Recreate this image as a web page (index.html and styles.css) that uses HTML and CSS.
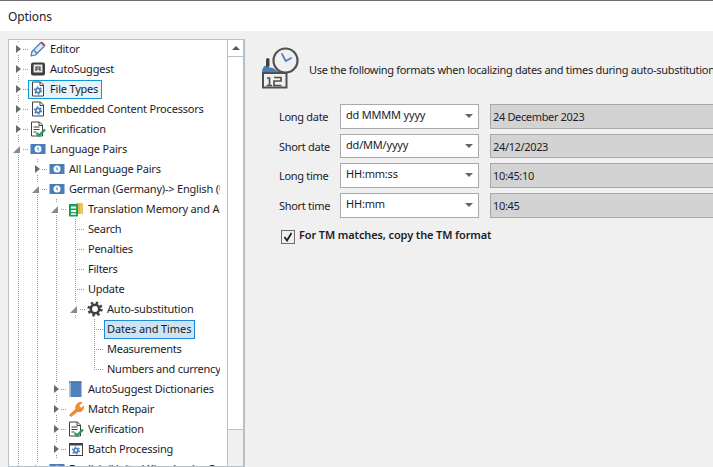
FILE: index.html
```html
<!DOCTYPE html>
<html lang="en">
<head>
<meta charset="utf-8">
<title>Options</title>
<link rel="stylesheet" href="styles.css">
</head>
<body>
<svg class="defs" width="0" height="0" aria-hidden="true">
  <symbol id="i-pencil" viewBox="0 0 16 16">
    <path d="M1 15l1-4.500L11 1.500l3.500 3.500-9 9z" fill="#dce8f5" stroke="#4a7ebb" stroke-width="1.200" stroke-linejoin="round"/>
    <path d="M4 9.500l3 3" stroke="#4a7ebb" stroke-width="1.200"/>
    <path d="M12 .5l3.500 3.500-1.300 1.300-3.500-3.500z" fill="#c9403a"/>
  </symbol>
  <symbol id="i-auto" viewBox="0 0 16 16">
    <rect x="1" y="1.500" width="14" height="13" rx="2" fill="#3c3c3c"/>
    <rect x="3.500" y="3.500" width="9" height="8" fill="#e6e6e6"/>
    <path d="M6 10V6h4v4M6 8h4" fill="none" stroke="#3c3c3c" stroke-width="1.100"/>
  </symbol>
  <symbol id="i-file" viewBox="0 0 16 16">
    <path d="M2.500 1h8l3 3v11h-11z" fill="#fff" stroke="#404040"/>
    <path d="M10 1v3.500h3.500" fill="none" stroke="#404040"/>
    <circle cx="8" cy="9.500" r="2.200" fill="none" stroke="#4a7ebb" stroke-width="1.700"/>
    <circle cx="8" cy="9.500" r="3.500" fill="none" stroke="#4a7ebb" stroke-width="1.400" stroke-dasharray="1.800 1.860"/>
  </symbol>
  <symbol id="i-verify" viewBox="0 0 16 16">
    <path d="M1.500 1h8l3 3v11h-11z" fill="#fff" stroke="#404040"/>
    <path d="M9 1v3.500h3.500M3.500 6h6M3.500 8.500h6M3.500 11h3" fill="none" stroke="#404040"/>
    <path d="M6.500 12l2.500 2.500 6-6" fill="none" stroke="#1e9e5a" stroke-width="2.400"/>
  </symbol>
  <symbol id="i-lang" viewBox="0 0 16 16">
    <rect x="0.500" y="3" width="15" height="10" fill="#4a7ebb"/>
    <circle cx="8" cy="8" r="3.500" fill="#fff"/>
    <path d="M7.500 6l1.500 .7-.4 1.300.8 .8-1.200 1.400-.4-1.500-1-.7z" fill="#7fa5d3"/>
  </symbol>
  <symbol id="i-tm" viewBox="0 0 16 16">
    <rect x="8" y="2" width="7" height="11" fill="#f0c25a"/>
    <path d="M11 2v11" stroke="#d9a43a"/>
    <rect x="1" y="3" width="9" height="12.500" fill="#1e9e5a"/>
    <path d="M3 5.500h5v2H3zM3 9h5v2H3zM3 12.300h5v1.500H3z" fill="#fff"/>
  </symbol>
  <symbol id="i-gear" viewBox="0 0 16 16">
    <circle cx="8" cy="8" r="4.200" fill="none" stroke="#404040" stroke-width="2.600"/>
    <circle cx="8" cy="8" r="6.300" fill="none" stroke="#404040" stroke-width="2.600" stroke-dasharray="2.400 2.548"/>
  </symbol>
  <symbol id="i-book" viewBox="0 0 16 16">
    <rect x="1" y="0.500" width="12.500" height="15.500" fill="#4f81bd"/>
    <rect x="1" y="0.500" width="1.800" height="15.500" fill="#a9c4e2"/>
    <path d="M1 1h12.500" stroke="#2f62a0"/>
  </symbol>
  <symbol id="i-wrench" viewBox="0 0 16 16">
    <path d="M1.500 14L8 8C7 5 9 1 14 1.500L11 4.500l.7 2 2 .7L15.500 5c.5 4-2.500 6.500-6 5.500L3 15.500z" fill="#ec8a3a" stroke="#ec8a3a" stroke-linejoin="round"/>
  </symbol>
  <symbol id="i-batch" viewBox="0 0 16 16">
    <rect x="1.500" y="2.500" width="13" height="12" fill="#fff" stroke="#404040"/>
    <rect x="1" y="2" width="14" height="2.500" fill="#404040"/>
    <circle cx="8" cy="9.500" r="2" fill="none" stroke="#4a7ebb" stroke-width="1.700"/>
    <circle cx="8" cy="9.500" r="3.400" fill="none" stroke="#4a7ebb" stroke-width="1.400" stroke-dasharray="1.800 1.760"/>
  </symbol>
</svg>

<header class="title">Options</header>

<main class="main">
  <nav class="tree">
    <div class="rows">
      <div class="row"><span class="c e closed"><i class="tri"></i></span><span class="item"><svg class="ic"><use href="#i-pencil"/></svg><span class="txt">Editor</span></span></div>
      <div class="row"><span class="c e closed"><i class="tri"></i></span><span class="item"><svg class="ic"><use href="#i-auto"/></svg><span class="txt">AutoSuggest</span></span></div>
      <div class="row"><span class="c e closed"><i class="tri"></i></span><span class="item focus"><svg class="ic"><use href="#i-file"/></svg><span class="txt">File Types</span></span></div>
      <div class="row"><span class="c e closed"><i class="tri"></i></span><span class="item"><svg class="ic"><use href="#i-file"/></svg><span class="txt">Embedded Content Processors</span></span></div>
      <div class="row"><span class="c e closed"><i class="tri"></i></span><span class="item"><svg class="ic"><use href="#i-verify"/></svg><span class="txt">Verification</span></span></div>
      <div class="row"><span class="c e open"><i class="tri"></i></span><span class="item"><svg class="ic"><use href="#i-lang"/></svg><span class="txt">Language Pairs</span></span></div>
      <div class="row"><span class="c g"></span><span class="c e closed"><i class="tri"></i></span><span class="item"><svg class="ic"><use href="#i-lang"/></svg><span class="txt">All Language Pairs</span></span></div>
      <div class="row"><span class="c g"></span><span class="c e open"><i class="tri"></i></span><span class="item"><svg class="ic"><use href="#i-lang"/></svg><span class="txt">German (Germany)-&gt; English (United Kingdom)</span></span></div>
      <div class="row"><span class="c g"></span><span class="c g"></span><span class="c e open"><i class="tri"></i></span><span class="item"><svg class="ic"><use href="#i-tm"/></svg><span class="txt">Translation Memory and Automated Translation</span></span></div>
      <div class="row"><span class="c g"></span><span class="c g"></span><span class="c g"></span><span class="c l"></span><span class="item leaf"><span class="txt">Search</span></span></div>
      <div class="row"><span class="c g"></span><span class="c g"></span><span class="c g"></span><span class="c l"></span><span class="item leaf"><span class="txt">Penalties</span></span></div>
      <div class="row"><span class="c g"></span><span class="c g"></span><span class="c g"></span><span class="c l"></span><span class="item leaf"><span class="txt">Filters</span></span></div>
      <div class="row"><span class="c g"></span><span class="c g"></span><span class="c g"></span><span class="c l"></span><span class="item leaf"><span class="txt">Update</span></span></div>
      <div class="row"><span class="c g"></span><span class="c g"></span><span class="c g"></span><span class="c e open"><i class="tri"></i></span><span class="item"><svg class="ic"><use href="#i-gear"/></svg><span class="txt">Auto-substitution</span></span></div>
      <div class="row"><span class="c g"></span><span class="c g"></span><span class="c g"></span><span class="c n"></span><span class="c l"></span><span class="item leaf selected"><span class="txt">Dates and Times</span></span></div>
      <div class="row"><span class="c g"></span><span class="c g"></span><span class="c g"></span><span class="c n"></span><span class="c l"></span><span class="item leaf"><span class="txt">Measurements</span></span></div>
      <div class="row"><span class="c g"></span><span class="c g"></span><span class="c g"></span><span class="c n"></span><span class="c l end"></span><span class="item leaf"><span class="txt">Numbers and currency</span></span></div>
      <div class="row"><span class="c g"></span><span class="c g"></span><span class="c e closed"><i class="tri"></i></span><span class="item"><svg class="ic"><use href="#i-book"/></svg><span class="txt">AutoSuggest Dictionaries</span></span></div>
      <div class="row"><span class="c g"></span><span class="c g"></span><span class="c e closed"><i class="tri"></i></span><span class="item"><svg class="ic"><use href="#i-wrench"/></svg><span class="txt">Match Repair</span></span></div>
      <div class="row"><span class="c g"></span><span class="c g"></span><span class="c e closed"><i class="tri"></i></span><span class="item"><svg class="ic"><use href="#i-verify"/></svg><span class="txt">Verification</span></span></div>
      <div class="row"><span class="c g"></span><span class="c g"></span><span class="c e closed"><i class="tri"></i></span><span class="item"><svg class="ic"><use href="#i-batch"/></svg><span class="txt">Batch Processing</span></span></div>
      <div class="row"><span class="c g"></span><span class="c e closed"><i class="tri"></i></span><span class="item"><svg class="ic"><use href="#i-lang"/></svg><span class="txt">English (United Kingdom)-&gt; German (Germany)</span></span></div>
    </div>
    <div class="scrollbar">
      <div class="sb-up"><i class="sb-arrow"></i></div>
      <div class="sb-thumb"></div>
    </div>
  </nav>

  <section class="pane">
    <div class="intro">
      <svg class="intro-icon" viewBox="0 0 38 42" aria-hidden="true">
        <path d="M1 24c1-5 3-6 5-5 2 1 4 2 6 2l6 4v2H1z" fill="#4a7ebb"/>
        <rect x="5" y="11" width="3.500" height="9" rx="1.700" fill="#404040"/>
        <path d="M2 26h23.500v14.500H2z" fill="#f0f0f0" stroke="#505050" stroke-width="2"/>
        <path d="M6 31h2.500v7M5.500 38.500h5.500M13 30.500h7v3.500h-7v4.500h7.500" fill="none" stroke="#505050" stroke-width="1.700"/>
        <circle cx="24.500" cy="13.500" r="12" fill="#f0f0f0" stroke="#505050" stroke-width="2.200"/>
        <path d="M20.700 6.300l4 7.700 6-3.300" fill="none" stroke="#4a7ebb" stroke-width="1.700"/>
      </svg>
      <p class="intro-text">Use the following formats when localizing dates and times during auto-substitution</p>
    </div>

    <div class="form">
      <label class="lbl">Long date</label>
      <div class="combo"><span>dd MMMM yyyy</span><i class="combo-arrow"></i></div>
      <div class="field">24 December 2023</div>

      <label class="lbl">Short date</label>
      <div class="combo"><span>dd/MM/yyyy</span><i class="combo-arrow"></i></div>
      <div class="field">24/12/2023</div>

      <label class="lbl">Long time</label>
      <div class="combo"><span>HH:mm:ss</span><i class="combo-arrow"></i></div>
      <div class="field">10:45:10</div>

      <label class="lbl">Short time</label>
      <div class="combo"><span>HH:mm</span><i class="combo-arrow"></i></div>
      <div class="field">10:45</div>
    </div>

    <div class="check">
      <span class="box"><svg viewBox="0 0 12 12" width="12" height="12" aria-hidden="true"><path d="M2.500 6l2.500 3.500 4.500-7.500" fill="none" stroke="#222" stroke-width="1.800"/></svg></span>
      <span class="check-text">For TM matches, copy the TM format</span>
    </div>
  </section>
</main>
</body>
</html>
```

FILE: styles.css
```css
* { box-sizing: border-box; }

html, body {
  margin: 0;
  height: 467px;
  overflow: hidden;
}

body {
  width: 713px;
  display: flex;
  flex-direction: column;
  background: #f0f0f0;
  color: #1c1c28;
  font-family: "Noto Sans", "Open Sans", sans-serif;
  font-size: 11px;
  letter-spacing: -0.2px;
}

.defs { display: block; height: 0; }

.title {
  height: 31px;
  flex: none;
  background: #fff;
  border-top: 1px solid #6f6f6f;
  padding: 1px 0 0 8px;
  font-size: 12px;
  line-height: 30px;
  letter-spacing: -0.1px;
}

.main {
  flex: 1;
  min-height: 0;
  display: flex;
  padding: 8px 0 0 8px;
  overflow: hidden;
}

/* tree */
.tree {
  width: 237px;
  flex: none;
  display: flex;
  background: #fff;
  border: 1px solid #b4c0ca;
  border-right-width: 2px;
  overflow: hidden;
}

.rows {
  width: 218px;
  flex: none;
  margin-top: -1px;
  overflow: hidden;
}

.row {
  width: 211px;
  height: 20px;
  display: flex;
  align-items: center;
  white-space: nowrap;
  overflow: hidden;
}

.c {
  width: 19px;
  height: 20px;
  flex: none;
  display: flex;
  align-items: center;
  justify-content: center;
  --dots-v: repeating-linear-gradient(to bottom, #9a9a9a 0 1px, transparent 1px 2px);
  --dots-h: repeating-linear-gradient(to right, #9a9a9a 0 1px, transparent 1px 2px);
  background-repeat: no-repeat;
}

.g {
  background-image: var(--dots-v);
  background-size: 1px 100%;
  background-position: 9px 0;
}

.n { background: none; }

.l {
  background-image: var(--dots-v), var(--dots-h);
  background-size: 1px 100%, 10px 1px;
  background-position: 9px 0, 9px 10px;
}

.l.end {
  background-size: 1px 10px, 10px 1px;
}

.e {
  background-image: var(--dots-v), var(--dots-v), var(--dots-h);
  background-size: 1px 4px, 1px 4px, 5px 1px;
  background-position: 9px 0, 9px 16px, 14px 10px;
}

.tri { display: block; width: 0; height: 0; }

.closed .tri {
  border-left: 5px solid #6a6a6a;
  border-top: 4px solid transparent;
  border-bottom: 4px solid transparent;
  margin-left: -1px;
}

.open .tri {
  border-right: 7px solid #8a8a8a;
  border-top: 7px solid transparent;
  margin-left: -4px;
}

.item {
  display: flex;
  align-items: center;
  height: 19px;
  gap: 4px;
  padding: 0 3px 0 2px;
  border: 1px solid transparent;
}

.txt { padding-bottom: 2px; }

.leaf .txt { letter-spacing: -0.25px; }

.ic { width: 16px; height: 16px; flex: none; margin-left: -1px; margin-top: -1px; }

.item.focus {
  background: #e7f3fa;
  border-color: #0d9ad6;
}

.item.selected {
  background: #cbe4f6;
  border-color: #1e8ad8;
}

.item.selected .txt { letter-spacing: -0.1px; }

/* scrollbar */
.scrollbar {
  flex: 1;
  display: flex;
  flex-direction: column;
  background: #f0f0f0;
  border-left: 1px solid #b4c0ca;
}

.sb-up {
  height: 17px;
  flex: none;
  background: #fff;
  border-bottom: 1px solid #b4c0ca;
  display: flex;
  align-items: center;
  justify-content: center;
}

.sb-arrow {
  display: block;
  width: 0;
  height: 0;
  border-left: 4px solid transparent;
  border-right: 4px solid transparent;
  border-bottom: 4px solid #555;
}

.sb-thumb {
  height: 373px;
  flex: none;
  background: #fff;
  border-bottom: 1px solid #b4c0ca;
}

/* right pane */
.pane {
  flex: 1;
  min-width: 0;
  padding: 8px 0 0 16px;
}

.intro {
  display: flex;
  align-items: flex-start;
  gap: 10px;
  height: 42px;
}

.intro-icon { width: 38px; height: 42px; flex: none; }

.intro-text {
  margin: 15px 0 0;
  line-height: 16px;
  white-space: nowrap;
  letter-spacing: -0.3px;
}

.form {
  margin-top: 15px;
  padding-left: 18px;
  display: grid;
  grid-template-columns: 61px 139px 240px;
  grid-template-rows: 25px 24px 25px 25px;
  row-gap: 5px;
  align-items: stretch;
}

.lbl {
  align-self: center;
  line-height: 16px;
  padding-top: 1px;
  letter-spacing: -0.3px;
}

.combo {
  display: flex;
  align-items: center;
  justify-content: space-between;
  background: #fff;
  border: 1px solid #a9a9a9;
  padding: 0 5px 4px 5px;
}

.combo-arrow {
  display: block;
  width: 0;
  height: 0;
  border-left: 4px solid transparent;
  border-right: 4px solid transparent;
  border-top: 4px solid #666;
  margin-top: 3px;
}

.field {
  margin-left: 11px;
  background: #d3d3d3;
  border: 1px solid #a9a9ad;
  padding: 0 0 0 2px;
  display: flex;
  align-items: center;
  letter-spacing: -0.35px;
}

.check {
  margin: 9px 0 0 20px;
  display: flex;
  align-items: center;
  gap: 4px;
}

.box {
  width: 14px;
  height: 14px;
  flex: none;
  display: flex;
  align-items: center;
  justify-content: center;
  border: 1px solid #6c6c6c;
}

.check-text {
  font-weight: 600;
  white-space: nowrap;
  letter-spacing: -0.12px;
  padding-bottom: 4px;
}
```
